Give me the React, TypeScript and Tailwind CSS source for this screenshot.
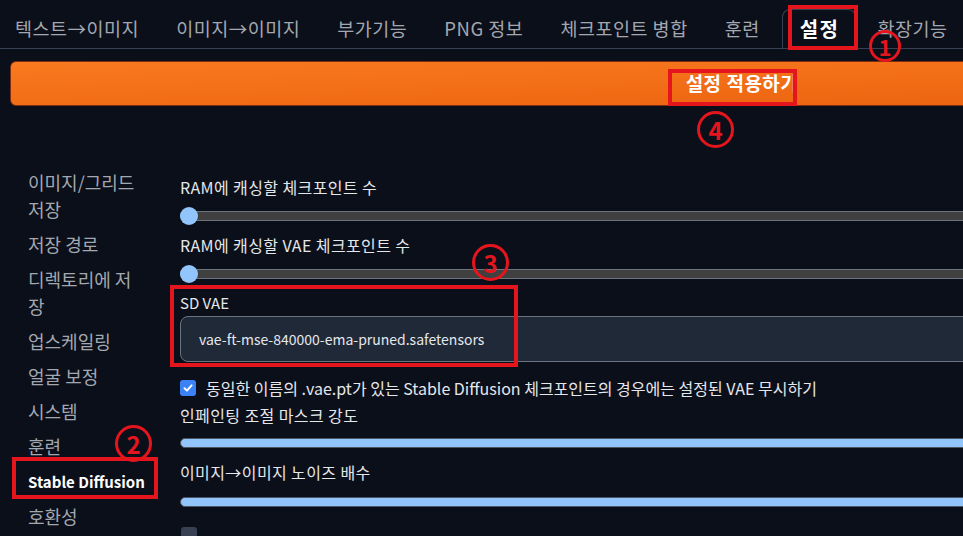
import React from "react";

const FONT = { fontFamily: '"Noto Sans CJK KR", "Noto Sans", sans-serif' };

const tabs = ["텍스트→이미지", "이미지→이미지", "부가기능", "PNG 정보", "체크포인트 병합", "훈련", "설정", "확장기능"];

const sections = [
  "이미지/그리드 저장",
  "저장 경로",
  "디렉토리에 저장",
  "업스케일링",
  "얼굴 보정",
  "시스템",
  "훈련",
  "Stable Diffusion",
  "호환성",
];

function Label({ children }: { children: React.ReactNode }) {
  return <div className="h-[22px] leading-[22px] text-[16px] tracking-[0.4px] text-[#e5e7eb]">{children}</div>;
}

// slider at minimum: gray track with a thumb on the left
function EmptySlider() {
  return (
    <div className="relative h-[22px] flex items-center">
      <div className="h-[10px] w-full rounded-full border border-[#6b7280] bg-[#404040]" />
      <div className="absolute left-0 top-[2px] h-[18px] w-[18px] rounded-full bg-[#93c5fd]" />
    </div>
  );
}

// slider filled all the way
function FullSlider() {
  return (
    <div className="h-[22px] flex items-center">
      <div className="h-[10px] w-full rounded-full border border-[#4b5563] bg-[#93c5fd]" />
    </div>
  );
}

function Circle({ n, className }: { n: string; className: string }) {
  return (
    <div
      className={`absolute flex items-center justify-center rounded-full border-[3px] border-[#e5151d] text-[#e5151d] font-bold ${className}`}
    >
      {n}
    </div>
  );
}

function RedBox({ className }: { className: string }) {
  return <div className={`absolute border-[4px] border-[#e5151d] ${className}`} />;
}

export default function App() {
  return (
    <div className="relative w-[963px] h-[536px] overflow-hidden bg-[#0b0f19]" style={FONT}>
      <div className="w-[1474px]">
        {/* Tabs */}
        <div className="flex items-end h-[49px] border-b border-[#374151]">
          <div className="flex gap-[7px]">
            {tabs.map((t) =>
              t === "설정" ? (
                <div
                  key={t}
                  className="h-[39px] pl-[17px] pr-[15px] leading-[38px] text-[20px] tracking-[1.5px] font-bold text-white border border-b-0 border-[#374151] rounded-t-lg bg-[#0b0f19] -mb-px"
                >
                  {t}
                </div>
              ) : (
                <div key={t} className="h-[39px] px-[15px] leading-[38px] text-[18.5px] tracking-[0.5px] text-[#a3a7b0]">
                  {t}
                </div>
              )
            )}
          </div>
        </div>

        {/* Apply button */}
        <div className="pl-[10px] pt-[12px]">
          <div className="h-[45px] rounded-[6px] border border-[#7c2d12] bg-gradient-to-br from-[#f97a1f] to-[#ea5f0c] flex items-center justify-center text-[19px] tracking-[0.5px] font-bold text-white">
            설정 적용하기
          </div>
        </div>

        {/* Settings body */}
        <div className="flex mt-[56px]">
          <div className="w-[180px] pl-[28px] pr-[40px] pt-[3px]">
            {sections.map((s) =>
              s === "Stable Diffusion" ? (
                <div key={s} className="py-[4px] leading-[27px] text-[15px] font-semibold text-white whitespace-nowrap">
                  {s}
                </div>
              ) : (
                <div key={s} className="py-[4px] leading-[27px] text-[18px] text-[#a3a7b0]">
                  {s}
                </div>
              )
            )}
          </div>

          <div className="flex-1 pt-[14px]">
            <Label>RAM에 캐싱할 체크포인트 수</Label>
            <div className="my-[7px]">
              <EmptySlider />
            </div>
            <Label>RAM에 캐싱할 VAE 체크포인트 수</Label>
            <div className="my-[7px]">
              <EmptySlider />
            </div>
            <div className="h-[22px] leading-[22px] text-[15px] text-[#e5e7eb]">SD VAE</div>
            <div className="mt-[2px] h-[46px] rounded-lg border border-[#6b7280] bg-[#1f2937] flex items-center px-[18px] text-[14px] text-[#e5e7eb]">
              vae-ft-mse-840000-ema-pruned.safetensors
            </div>
            <div className="mt-[15px] h-[22px] flex items-center gap-[10px]">
              <div className="w-[16px] h-[16px] rounded-[3px] bg-[#3b82f6] flex items-center justify-center">
                <svg width="12" height="12" viewBox="0 0 12 12" fill="none">
                  <path d="M2.5 6.2 L5 8.6 L9.6 3.4" stroke="white" strokeWidth="2" strokeLinecap="round" strokeLinejoin="round" />
                </svg>
              </div>
              <span className="text-[16px] text-[#e5e7eb] leading-[22px]">
                동일한 이름의 .vae.pt가 있는 Stable Diffusion 체크포인트의 경우에는 설정된 VAE 무시하기
              </span>
            </div>
            <div className="mt-[5px]">
              <Label>인페인팅 조절 마스크 강도</Label>
            </div>
            <div className="mt-[6px]">
              <FullSlider />
            </div>
            <div className="mt-[7px]">
              <Label>이미지→이미지 노이즈 배수</Label>
            </div>
            <div className="mt-[8px]">
              <FullSlider />
            </div>
            <div className="mt-[14px] ml-px w-[16px] h-[16px] rounded-[3px] bg-[#374151]" />
          </div>
        </div>
      </div>

      {/* Annotations */}
      <RedBox className="left-[788px] top-[5px] w-[70px] h-[45px]" />
      <Circle n="1" className="left-[869px] top-[30px] w-[32px] h-[32px] text-[22px]" />
      <RedBox className="left-[668px] top-[69px] w-[129px] h-[37px]" />
      <Circle n="4" className="left-[697px] top-[111px] w-[37px] h-[37px] text-[24px]" />
      <RedBox className="left-[170px] top-[285px] w-[348px] h-[82px]" />
      <Circle n="3" className="left-[472px] top-[244px] w-[37px] h-[37px] text-[24px]" />
      <RedBox className="left-[12px] top-[457px] w-[146px] h-[42px]" />
      <Circle n="2" className="left-[115px] top-[425px] w-[37px] h-[37px] text-[24px]" />
    </div>
  );
}
